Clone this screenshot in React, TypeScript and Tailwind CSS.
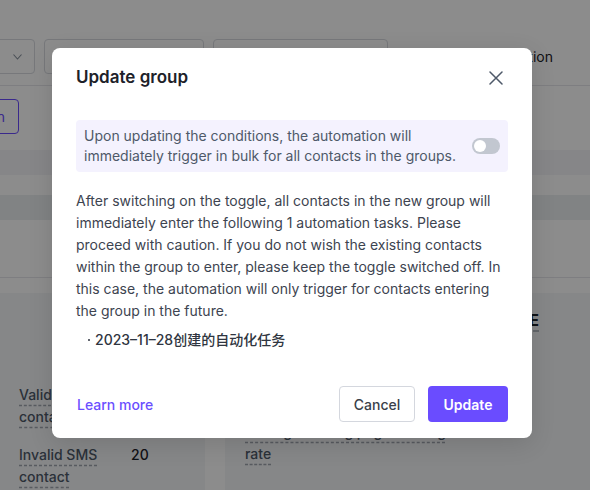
import React, { useState } from "react";

const UpdateGroupModal: React.FC<{ onClose: () => void }> = ({ onClose }) => {
  const [bulk, setBulk] = useState(false);

  return (
    <div className="absolute left-[52px] top-[48px] w-[480px] rounded-lg bg-white px-6 pb-4 shadow-[0_6px_24px_rgba(0,0,0,0.12)]">
      <div className="mt-[18px] flex h-[24px] items-center justify-between">
        <h2 className="text-[17px] font-semibold text-[#1d2129]">Update group</h2>
        <button className="mr-[5px] flex h-[14px] w-[14px] items-center justify-center" onClick={onClose}>
          <svg width="14" height="14" viewBox="0 0 14 14" fill="none">
            <path d="M1 1L13 13M13 1L1 13" stroke="#4e5969" strokeWidth="1.5" strokeLinecap="round" />
          </svg>
        </button>
      </div>

      <div className="mt-[30px] flex h-[52px] items-center gap-[10px] rounded bg-[#f4f2fe] px-2">
        <p className="flex-1 text-[14px] leading-[20px] text-[#4e5969]">
          Upon updating the conditions, the automation will immediately trigger in bulk for all contacts in the groups.
        </p>
        <button
          className={`flex h-[16px] w-[28px] shrink-0 items-center rounded-full px-[2px] ${bulk ? "justify-end bg-[#6a4cff]" : "justify-start bg-[#c2c7d0]"}`}
          onClick={() => setBulk(!bulk)}
        >
          <span className="h-[12px] w-[12px] rounded-full bg-white" />
        </button>
      </div>

      <p className="mt-[18px] text-[14px] leading-[22px] text-[#3d4450]">
        After switching on the toggle, all contacts in the new group will immediately enter the following 1 automation
        tasks. Please proceed with caution. If you do not wish the existing contacts within the group to enter, please
        keep the toggle switched off. In this case, the automation will only trigger for contacts entering the group in
        the future.
      </p>
      <div className="mt-[7px] flex items-center pl-[12px] text-[14px] font-medium leading-[22px] text-[#2f3540]">
        <span className="mr-[5px] h-[2px] w-[2px] rounded-full bg-[#2f3540]" />
        <span>2023–11–28创建的自动化任务</span>
      </div>

      <div className="mt-[35px] flex items-center">
        <a className="ml-[1px] text-[14px] font-medium text-[#6b4fff]">Learn more</a>
        <div className="ml-auto flex gap-[13px]">
          <button
            className="h-[36px] w-[76px] rounded border border-[#d4d7de] bg-white text-[14px] font-medium text-[#3a3f4a]"
            onClick={onClose}
          >
            Cancel
          </button>
          <button className="h-[36px] w-[80px] rounded bg-[#6a4cff] text-[14px] font-semibold text-white">Update</button>
        </div>
      </div>
    </div>
  );
};

const App: React.FC = () => {
  const [open, setOpen] = useState(true);

  return (
    <div className="relative h-[490px] w-[590px] overflow-hidden bg-white font-['Inter','Noto_Sans_CJK_SC',sans-serif]">
      {/* page behind the dialog */}
      <div className="flex h-[86px] items-end gap-[9px] border-b border-[#e5e6eb] pb-[11px]">
        <div className="-ml-[60px] flex h-[35px] w-[95px] shrink-0 items-center justify-end rounded border border-[#d9dbe1] pr-[12px]">
          <svg width="9" height="6" viewBox="0 0 9 6" fill="none">
            <path d="M0.5 0.5L4.5 5L8.5 0.5" stroke="#86909c" strokeWidth="1.1" />
          </svg>
        </div>
        <div className="h-[35px] w-[160px] shrink-0 rounded border border-[#d9dbe1]" />
        <div className="h-[35px] w-[175px] shrink-0 rounded border border-[#d9dbe1]" />
        <div className="ml-auto mr-[37px] flex h-[35px] items-center text-[14px] text-[#1d2129]">Automation</div>
      </div>

      <div className="h-[64px] pt-[13px]">
        <div className="-ml-[91px] flex h-[35px] w-[110px] items-center justify-end rounded border border-[#6a4cff] pr-[13px] text-[14px] text-[#6a4cff]">
          Add condition
        </div>
      </div>
      <div className="h-[25px] bg-[#f4f5f7]" />
      <div className="h-[20px] bg-white" />
      <div className="h-[25px] bg-[#eceef1]" />
      <div className="h-[58px] border-b border-[#e5e6eb] bg-white" />
      <div className="h-[15px] bg-white" />

      <div className="flex h-[197px]">
        <div className="w-[205px] bg-[#f5f6f8] pl-[19px] pt-[91px]">
          <div className="flex items-start text-[14px] font-medium leading-[22px]">
            <span className="w-[82px] text-[#4e5969] underline decoration-[#a0a6b0] decoration-dashed underline-offset-[5px]">
              Valid contact
            </span>
            <span className="ml-[30px] text-[#1d2129]">1,280</span>
          </div>
          <div className="mt-[16px] flex items-start text-[14px] font-medium leading-[22px]">
            <span className="w-[82px] text-[#4e5969] underline decoration-[#a0a6b0] decoration-dashed underline-offset-[5px]">
              Invalid SMS contact
            </span>
            <span className="ml-[30px] text-[#1d2129]">20</span>
          </div>
        </div>
        <div className="w-[20px] bg-white" />
        <div className="flex-1 bg-[#f5f6f8] pl-[20px] pt-[15px]">
          <div className="flex h-[24px] items-center justify-end pr-[51px] text-[16px] font-bold text-[#1d2129]">
            <span className="underline decoration-[#a0a6b0] decoration-dashed underline-offset-[5px]">DELIVERY RATE</span>
          </div>
          <div className="mt-[89px] w-[210px] text-[14px] font-medium leading-[22px] text-[#4e5969] underline decoration-[#a0a6b0] decoration-dashed underline-offset-[5px]">
            Average landing page clicking rate
          </div>
        </div>
      </div>

      {open && (
        <div className="absolute inset-0 bg-black/45">
          <UpdateGroupModal onClose={() => setOpen(false)} />
        </div>
      )}
    </div>
  );
};

export default App;
